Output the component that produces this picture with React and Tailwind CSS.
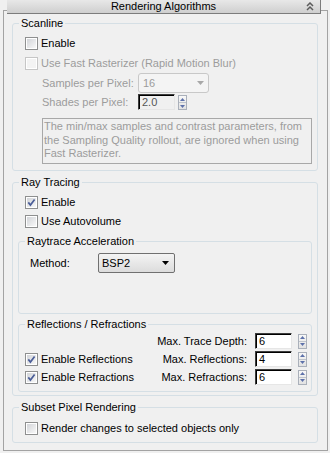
import React from "react";

const Check = ({ checked, disabled }) => (
  <div
    className={`relative w-[13px] h-[13px] shrink-0 border p-[1px] bg-white ${
      disabled ? "border-[#c6c6c6]" : "border-[#8e8f8f]"
    }`}
  >
    <div
      className={`w-full h-full ${
        disabled ? "bg-[#f3f3f3]" : "bg-linear-to-br from-[#d2d4d8] to-[#f8f8f8]"
      }`}
    />
    {checked && (
      <svg className="absolute left-0 top-0" width="11" height="11" viewBox="0 0 11 11">
        <path d="M2.3 5.4 L4.4 8 L8.6 2.4" fill="none" stroke="#4b5e98" strokeWidth="1.7" />
      </svg>
    )}
  </div>
);

const CheckRow = ({ label, checked, disabled }) => (
  <div className="flex items-center h-[13px]">
    <Check checked={checked} disabled={disabled} />
    <span className={`ml-[3px] whitespace-nowrap ${disabled ? "text-[#9c9c9c]" : "text-black"}`}>{label}</span>
  </div>
);

const Spinner = ({ className }) => (
  <div
    className={`flex flex-col w-[9px] h-[15px] border border-[#aab0ba] bg-linear-to-b from-[#f8f8f8] to-[#e2e2e2] ${className}`}
  >
    <div className="flex-1 flex items-center justify-center border-b border-[#bfc4cc]">
      <svg width="5" height="3" viewBox="0 0 5 3">
        <path d="M2.5 0 L5 3 L0 3 Z" fill="#5d71aa" />
      </svg>
    </div>
    <div className="flex-1 flex items-center justify-center">
      <svg width="5" height="3" viewBox="0 0 5 3">
        <path d="M0 0 L5 0 L2.5 3 Z" fill="#5d71aa" />
      </svg>
    </div>
  </div>
);

const NumBox = ({ value, dim }) => (
  <div
    className={`w-[37px] h-[16px] border border-t-[#3c3c3c] border-l-[#3c3c3c] border-r-[#e6e6e6] border-b-[#e6e6e6] shadow-[inset_1px_1px_0_#000] pl-[3px] flex items-center ${
      dim ? "bg-[#f0f0f0] text-[#555]" : "bg-white text-black"
    }`}
  >
    {value}
  </div>
);

const Group = ({ title, className, children }) => (
  <div className={`border border-[#d5dfe5] rounded-[3px] ${className}`}>
    <div className="-mt-[7px] ml-[6px] px-[2px] w-fit bg-[#f0f0f0] whitespace-nowrap">{title}</div>
    {children}
  </div>
);

export default function App() {
  return (
    <div className="w-[330px] h-[453px] bg-[#f0f0f0] overflow-hidden font-['Liberation_Sans',Arial,sans-serif] text-[11px] leading-[13px] text-black">
      {/* rollout title bar */}
      <div className="relative z-10 ml-[7px] w-[314px] h-[14px] flex items-center bg-linear-to-b from-[#e8e8e8] to-[#cfcfcf] border-b border-r border-[#7c7c7c]">
        <div className="w-[20px]" />
        <div className="flex-1 text-center">Rendering Algorithms</div>
        <div className="w-[20px] flex justify-center">
          <svg width="8" height="9" viewBox="0 0 8 9">
            <path d="M1 4 L4 1 L7 4 M1 8 L4 5 L7 8" fill="none" stroke="#5c5c5c" strokeWidth="1.5" />
          </svg>
        </div>
      </div>

      <div className="-mt-[4px] ml-[3px] w-[325px] h-[441px] border border-[#a3a3a3] pl-[8px]">
        {/* Scanline */}
        <Group title="Scanline" className="mt-[12px] w-[306px] h-[148px]">
          <div className="mt-[7px] pl-[12px]">
            <CheckRow label="Enable" />
          </div>
          <div className="mt-[7px] pl-[12px]">
            <CheckRow label="Use Fast Rasterizer (Rapid Motion Blur)" disabled />
          </div>
          <div className="mt-[3px] pl-[29px] flex items-center h-[20px]">
            <span className="w-[96px] text-[#9c9c9c]">Samples per Pixel:</span>
            <div className="w-[71px] h-[20px] rounded-[3px] border border-[#c8c8c8] bg-[#f4f4f4] flex items-center pl-[4px] pr-[4px] text-[#9c9c9c]">
              <span className="flex-1">16</span>
              <svg width="7" height="4" viewBox="0 0 7 4">
                <path d="M0 0 L7 0 L3.5 4 Z" fill="#a8a8a8" />
              </svg>
            </div>
          </div>
          <div className="mt-[1px] pl-[29px] flex items-start h-[16px]">
            <span className="w-[96px] h-[16px] flex items-center text-[#9c9c9c]">Shades per Pixel:</span>
            <NumBox value="2.0" dim />
            <Spinner className="ml-[3px] mt-[1px]" />
          </div>
          <div className="mt-[8px] ml-[29px] w-[270px] h-[46px] border border-[#a8a8a8] pl-[1px] pt-[1px] text-[#9c9c9c] whitespace-nowrap leading-[13.5px]">
            The min/max samples and contrast parameters, from
            <br />
            the Sampling Quality rollout, are ignored when using
            <br />
            Fast Rasterizer.
          </div>
        </Group>

        {/* Ray Tracing */}
        <Group title="Ray Tracing" className="mt-[11px] w-[306px] h-[214px]">
          <div className="mt-[7px] pl-[12px]">
            <CheckRow label="Enable" checked />
          </div>
          <div className="mt-[6px] pl-[12px]">
            <CheckRow label="Use Autovolume" />
          </div>

          <Group title="Raytrace Acceleration" className="mt-[13px] ml-[5px] w-[294px] h-[73px]">
            <div className="mt-[5px] pl-[11px] flex items-center h-[20px]">
              <span className="w-[68px]">Method:</span>
              <div className="w-[77px] h-[20px] rounded-[2px] border border-[#707070] bg-linear-to-b from-[#f4f4f4] to-[#dcdcdc] flex items-center pl-[3px] pr-[5px]">
                <span className="flex-1">BSP2</span>
                <svg width="7" height="4" viewBox="0 0 7 4">
                  <path d="M0 0 L7 0 L3.5 4 Z" fill="#000" />
                </svg>
              </div>
            </div>
          </Group>

          <Group title="Reflections / Refractions" className="mt-[10px] ml-[5px] w-[294px] h-[68px]">
            <div className="mt-[2px] pl-[6px] flex items-center h-[16px]">
              <div className="w-[222px] flex items-center">
                <span className="ml-auto">Max. Trace Depth:</span>
              </div>
              <div className="ml-[8px]">
                <NumBox value="6" />
              </div>
              <Spinner className="ml-[6px]" />
            </div>
            <div className="mt-[2px] pl-[6px] flex items-center h-[16px]">
              <div className="w-[222px] flex items-center">
                <CheckRow label="Enable Reflections" checked />
                <span className="ml-auto">Max. Reflections:</span>
              </div>
              <div className="ml-[8px]">
                <NumBox value="4" />
              </div>
              <Spinner className="ml-[6px]" />
            </div>
            <div className="mt-[2px] pl-[6px] flex items-center h-[16px]">
              <div className="w-[222px] flex items-center">
                <CheckRow label="Enable Refractions" checked />
                <span className="ml-auto">Max. Refractions:</span>
              </div>
              <div className="ml-[8px]">
                <NumBox value="6" />
              </div>
              <Spinner className="ml-[6px]" />
            </div>
          </Group>
        </Group>

        {/* Subset Pixel Rendering */}
        <Group title="Subset Pixel Rendering" className="mt-[11px] w-[306px] h-[36px]">
          <div className="mt-[8px] pl-[12px]">
            <CheckRow label="Render changes to selected objects only" />
          </div>
        </Group>
      </div>
    </div>
  );
}
